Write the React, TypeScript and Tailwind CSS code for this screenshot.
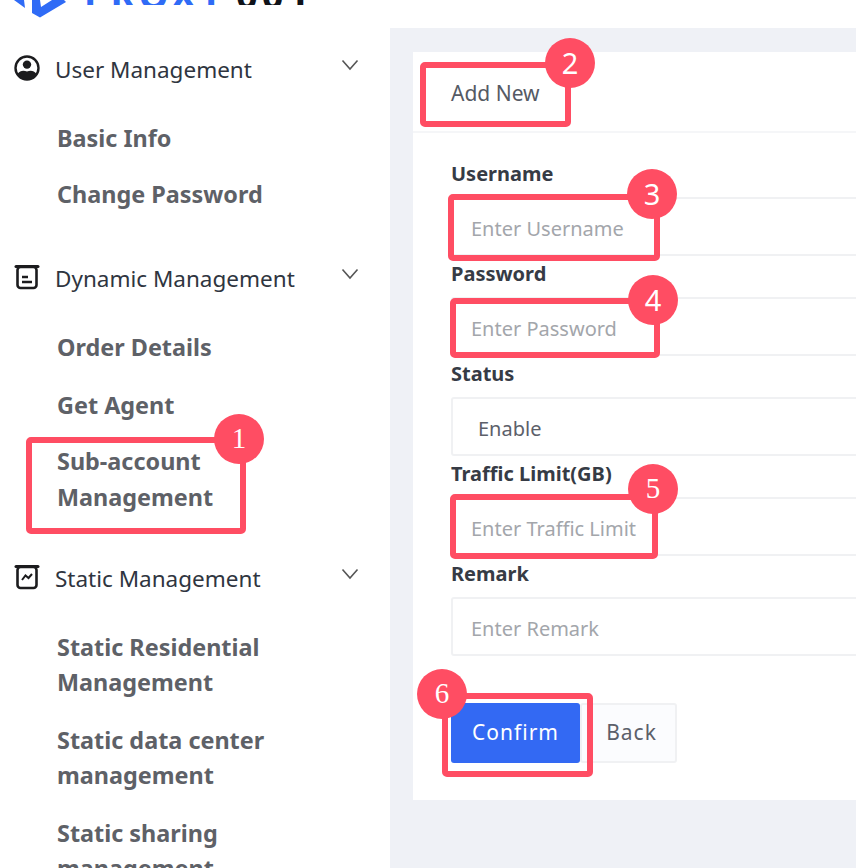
const font = 'font-["Noto_Sans","Open_Sans",sans-serif]'

function Chevron() {
  return (
    <svg viewBox="0 0 18 12" className="w-[18px] h-[12px] ml-auto mr-[31px] mb-[10px] text-[#555]" fill="none" stroke="currentColor" strokeWidth="1.6">
      <path d="M1.5 1.5 L9 10 L16.5 1.5" />
    </svg>
  )
}

function UserIcon() {
  return (
    <svg viewBox="0 0 26 26" className="w-[26px] h-[26px] -mt-[4px]">
      <circle cx="13" cy="13" r="11.5" fill="#fff" stroke="#1c1c1e" strokeWidth="2.4" />
      <circle cx="13" cy="9.6" r="4.2" fill="#1c1c1e" />
      <path d="M3.5 19 C6 15.6 9 15.4 13 16.4 C17 15.4 20 15.6 22.5 19 C20 23.4 16.5 25 13 25 C9.5 25 6 23.4 3.5 19 Z" fill="#1c1c1e" />
    </svg>
  )
}

function DocIcon() {
  return (
    <svg viewBox="0 0 26 26" className="w-[26px] h-[26px] -mt-[4px]" fill="none" stroke="#1c1c1e">
      <path d="M2 2.5 H24" strokeWidth="3" strokeLinecap="round" />
      <rect x="3.5" y="3" width="19" height="21" rx="3" strokeWidth="2.6" />
      <path d="M8 13 H14 M8 18 H18" strokeWidth="2.4" />
    </svg>
  )
}

function ChartIcon() {
  return (
    <svg viewBox="0 0 26 26" className="w-[26px] h-[26px] -mt-[4px]" fill="none" stroke="#1c1c1e">
      <path d="M2 2.5 H24" strokeWidth="3" strokeLinecap="round" />
      <rect x="3.5" y="3" width="19" height="21" rx="3" strokeWidth="2.6" />
      <path d="M8 16 L11.5 11.5 L14.5 14 L18 10" strokeWidth="2" />
    </svg>
  )
}

function SectionHead({ icon, label, className }: { icon: React.ReactNode; label: string; className: string }) {
  return (
    <div className={`flex items-center h-[44px] pl-[14px] ${className}`}>
      <span className="w-[41px] shrink-0">{icon}</span>
      <span className="text-[22.5px] -mt-[1px] text-[#2f3540] whitespace-nowrap">{label}</span>
      <Chevron />
    </div>
  )
}

function SubItem({ className, children }: { className: string; children: React.ReactNode }) {
  return (
    <div className={`pl-[57px] py-[10px] text-[23.4px] font-bold text-[#5e6167] ${className}`}>
      {children}
    </div>
  )
}

function Label({ children }: { children: React.ReactNode }) {
  return <div className="h-[41px] pt-[2px] text-[20px] leading-[32px] font-bold text-[#363b45]">{children}</div>
}

function Field({ label, placeholder }: { label: string; placeholder: string }) {
  return (
    <div>
      <Label>{label}</Label>
      <input
        placeholder={placeholder}
        className="w-full h-[59px] pl-[18px] pt-[4px] bg-white border-2 border-[#f0f1f3] rounded-[3px] text-[20px] outline-none placeholder:text-[#a3a6ab]"
      />
    </div>
  )
}

const boxes = [
  'left-[26px] top-[437px] w-[220px] h-[97px]',
  'left-[420px] top-[62px] w-[151px] h-[65px]',
  'left-[448px] top-[194px] w-[212px] h-[67px]',
  'left-[450px] top-[298px] w-[210px] h-[60px]',
  'left-[450px] top-[494px] w-[208px] h-[65px]',
  'left-[442px] top-[693px] w-[151px] h-[84px]',
]

const badges = [
  { n: '1', pos: 'left-[214px] top-[414px]', face: 'font-["Liberation_Serif",serif]' },
  { n: '2', pos: 'left-[545px] top-[38px]', face: '' },
  { n: '3', pos: 'left-[627px] top-[169px]', face: '' },
  { n: '4', pos: 'left-[628px] top-[275px]', face: '' },
  { n: '5', pos: 'left-[628px] top-[464px]', face: 'font-["Liberation_Serif",serif]' },
  { n: '6', pos: 'left-[417px] top-[669px]', face: 'font-["Liberation_Serif",serif]' },
]

export default function App() {
  return (
    <div className={`relative w-[856px] h-[868px] overflow-hidden bg-white ${font}`}>
      {/* logo, cut off by the top of the picture */}
      <div className="h-[28px] flex items-start">
        <svg viewBox="0 0 70 18" className="w-[70px] h-[18px] shrink-0" fill="#2f6bf6">
          <path d="M14 0 L24 0 L25 8 Z M32 0 L32 13 L40 17.5 L66 2 L64 0 L52 0 L41 7 L40 0 Z" />
        </svg>
        <div className="h-[5px] ml-[14px] flex items-end overflow-hidden">
          <div className="text-[38px] leading-[38px] font-bold -mb-[8px] tracking-[3px] whitespace-nowrap text-[#2f6bf6]">
            PROXY<span className="ml-[10px] tracking-[4px] text-[#10131a]">001</span>
          </div>
        </div>
      </div>

      <div className="flex h-[840px]">
        <aside className="w-[390px] shrink-0">
          <SectionHead icon={<UserIcon />} label="User Management" className="mt-[20px]" />
          <SubItem className="mt-[18px] leading-[36px]">Basic Info</SubItem>
          <SubItem className="leading-[36px]">Change Password</SubItem>
          <SectionHead icon={<DocIcon />} label="Dynamic Management" className="mt-[35px]" />
          <SubItem className="mt-[18px] leading-[36px]">Order Details</SubItem>
          <SubItem className="mt-[2px] leading-[36px]">Get Agent</SubItem>
          <SubItem className="leading-[36px]">Sub-account<br />Management</SubItem>
          <SectionHead icon={<ChartIcon />} label="Static Management" className="mt-[32px]" />
          <SubItem className="mt-[19px] mb-[3px] leading-[35px]">Static Residential<br />Management</SubItem>
          <SubItem className="mb-[3px] leading-[35px]">Static data center<br />management</SubItem>
          <SubItem className="leading-[35px]">Static sharing<br />management</SubItem>
        </aside>

        <main className="flex-1 min-w-0 bg-[#eff1f6] pt-[24px] pl-[23px]">
          <div className="w-[520px] h-[748px] bg-white">
            <div className="h-[81px] flex items-center pl-[38px] pt-[4px] border-b-2 border-[#f5f6f8] text-[21px] text-[#555a64]">
              Add New
            </div>
            <div className="pl-[38px] pt-[23px]">
              <Field label="Username" placeholder="Enter Username" />
              <Field label="Password" placeholder="Enter Password" />
              <div>
                <Label>Status</Label>
                <div className="h-[59px] flex items-center pl-[25px] pt-[4px] border-2 border-[#f0f1f3] rounded-[3px] text-[20px] text-[#5c606a]">
                  Enable
                </div>
              </div>
              <Field label="Traffic Limit(GB)" placeholder="Enter Traffic Limit" />
              <Field label="Remark" placeholder="Enter Remark" />
              <div className="flex mt-[47px]">
                <button className="w-[129px] h-[60px] bg-[#3369f3] rounded-[3px] text-white text-[21px] tracking-[1px]">
                  Confirm
                </button>
                <button className="w-[97px] h-[60px] pl-[6px] bg-[#fbfcfe] border-2 border-[#f0f1f3] rounded-[3px] text-[#5c606a] text-[21px] tracking-[1px]">
                  Back
                </button>
              </div>
            </div>
          </div>
        </main>
      </div>

      {/* tutorial annotations over the page */}
      {boxes.map((b) => (
        <div key={b} className={`absolute ${b} border-[6px] border-[#ff4d63] rounded-[5px]`} />
      ))}
      {badges.map((b) => (
        <div
          key={b.n}
          className={`absolute ${b.pos} ${b.face} w-[50px] h-[50px] rounded-full bg-[#ff4d63] flex items-center justify-center text-white text-[29px]`}
        >
          {b.n}
        </div>
      ))}
    </div>
  )
}
